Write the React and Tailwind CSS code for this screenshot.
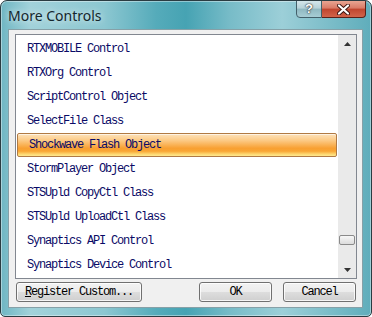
const items = [
  'RTXMOBILE Control',
  'RTXOrg Control',
  'ScriptControl Object',
  'SelectFile Class',
  'Shockwave Flash Object',
  'StormPlayer Object',
  'STSUpld CopyCtl Class',
  'STSUpld UploadCtl Class',
  'Synaptics API Control',
  'Synaptics Device Control',
];

const mono = "font-['Liberation_Mono',monospace] text-[12px] tracking-[-1.2px]";
const btn =
  'h-[20px] flex items-center justify-center rounded-[3px] border border-[#707070] bg-[linear-gradient(to_bottom,#f2f2f2_0%,#ebebeb_50%,#dddddd_51%,#cfcfcf_100%)] shadow-[inset_0_0_0_1px_rgba(255,255,255,0.8)] text-black';

function Arrow({ up }) {
  return (
    <svg width="7" height="4" viewBox="0 0 7 4">
      {up ? <path d="M3.5 0 L7 4 L0 4 Z" fill="#333" /> : <path d="M0 0 L7 0 L3.5 4 Z" fill="#333" />}
    </svg>
  );
}

export default function App() {
  return (
    <div className="w-[372px] h-[317px] flex flex-col rounded-t-[7px] rounded-b-[5px] border border-[#2a3c42] bg-[linear-gradient(90deg,#6fb6c3_0%,#a2d2da_8%,#8cc7d1_28%,#55abba_42%,#46a3b3_50%,#78bcc8_62%,#9ccfd8_76%,#5fadbb_100%)] shadow-[inset_0_0_0_1px_rgba(255,255,255,0.4)] overflow-hidden">
      <div className="h-[28px] flex items-start justify-between">
        <div className="h-full flex items-center pl-[7px] pt-px font-['Noto_Sans',sans-serif] text-[14px] text-[#14262c] [text-shadow:0_0_6px_rgba(255,255,255,0.9)]">
          More Controls
        </div>
        <div className="flex mr-[5px] -mt-px">
          <div className="w-[26px] h-[18px] flex items-center justify-center rounded-bl-[4px] border border-[#43606a] bg-[linear-gradient(to_bottom,#d4e6ea_0%,#b6d2d8_45%,#8fb8c1_50%,#a7cdd5_100%)] text-white font-['Liberation_Sans',sans-serif] font-bold text-[13px] [text-shadow:0_0_1px_#222,0_0_2px_#222]">
            ?
          </div>
          <div className="w-[44px] h-[18px] flex items-center justify-center rounded-br-[4px] border border-l-0 border-[#5a2018] bg-[linear-gradient(to_bottom,#e8a592_0%,#d97a66_45%,#c0452e_50%,#d2644a_100%)]">
            <svg width="13" height="11" viewBox="0 0 13 11">
              <path d="M2 1.5 L11 9.5 M11 1.5 L2 9.5" stroke="#3a1510" strokeWidth="4" strokeLinecap="round" />
              <path d="M2 1.5 L11 9.5 M11 1.5 L2 9.5" stroke="#fff" strokeWidth="2.2" strokeLinecap="round" />
            </svg>
          </div>
        </div>
      </div>
      <div className="flex-1 ml-[7px] mr-[8px] mb-[8px] flex flex-col bg-[#f0f0f0] border border-[#86a0a7] pl-[6px] pr-[5px] pt-[4px]">
        <div className="h-[245px] flex border border-[#828790] bg-white">
          <div className="flex-1 flex flex-col pt-[2px]">
            {items.map((t, i) => (
              <div
                key={t}
                className={
                  'h-[24px] flex items-center pl-[11px] text-[#0a0a66] ' +
                  mono +
                  (i === 4
                    ? ' mx-px rounded-[2px] border border-[#b07a44] bg-[linear-gradient(to_bottom,#fde2bb_0%,#fcc983_30%,#f8a032_65%,#f9a634_78%,#fdd872_92%,#fee890_100%)] shadow-[inset_0_1px_0_rgba(255,255,255,0.6)]'
                    : '')
                }
              >
                {t}
              </div>
            ))}
          </div>
          <div className="w-[18px] flex flex-col bg-[#eaeaea]">
            <div className="h-[17px] flex items-center justify-center">
              <Arrow up />
            </div>
            <div className="flex-1" />
            <div className="h-[10px] mx-px rounded-[2px] border border-[#8a8a8a] bg-[linear-gradient(to_bottom,#f7f7f7,#dcdcdc)]" />
            <div className="h-[16px]" />
            <div className="h-[17px] flex items-center justify-center">
              <Arrow />
            </div>
          </div>
        </div>
        <div className={'flex mt-[3px] px-px ' + mono}>
          <div className={btn + ' w-[126px]'}>
            <span>
              <span className="underline">R</span>egister Custom...
            </span>
          </div>
          <div className="flex-1" />
          <div className={btn + ' w-[73px] border-[#3c7fb1] shadow-[inset_0_0_0_1px_#c4e4f6,inset_0_0_2px_1px_#a8d8f0]'}>OK</div>
          <div className={btn + ' w-[73px] ml-[11px]'}>Cancel</div>
        </div>
      </div>
    </div>
  );
}
